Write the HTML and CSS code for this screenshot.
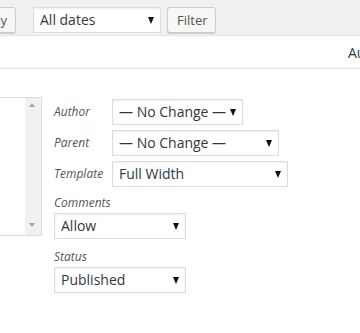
FILE: index.html
```html
<!DOCTYPE html>
<html>
<head>
<meta charset="utf-8">
<link rel="stylesheet" href="styles.css">
</head>
<body>
<div class="tablenav">
  <button class="btn btn-apply">Apply</button>
  <span class="sel sel-dates"><span class="sel-text">All dates</span><span class="arrow"></span></span>
  <button class="btn btn-filter">Filter</button>
</div>
<div class="thead">
  <span class="col-author">Author</span>
</div>
<div class="edit-row">
  <div class="listbox">
    <div class="list-body"></div>
    <div class="scrollbar">
      <span class="up"></span>
      <span class="down"></span>
    </div>
  </div>
  <div class="fields">
    <div class="inline-row">
      <span class="label">Author</span>
      <span class="sel w-author"><span class="sel-text">— No Change —</span><span class="arrow"></span></span>
    </div>
    <div class="inline-row">
      <span class="label">Parent</span>
      <span class="sel w-parent"><span class="sel-text">— No Change —</span><span class="arrow"></span></span>
    </div>
    <div class="inline-row">
      <span class="label">Template</span>
      <span class="sel w-template"><span class="sel-text">Full Width</span><span class="arrow"></span></span>
    </div>
    <div class="stack first">
      <span class="label">Comments</span>
      <span class="sel w-block"><span class="sel-text">Allow</span><span class="arrow"></span></span>
    </div>
    <div class="stack">
      <span class="label">Status</span>
      <span class="sel w-block"><span class="sel-text">Published</span><span class="arrow"></span></span>
    </div>
  </div>
</div>
</body>
</html>
```
FILE: styles.css
```css
* { box-sizing: border-box; }
html, body { margin: 0; padding: 0; background: #fff; }
body {
  width: 360px;
  height: 333px;
  overflow: hidden;
  font-family: "Open Sans", "Noto Sans", sans-serif;
  color: #444;
}
.tablenav {
  height: 35px;
  background: #f1f1f1;
  padding-top: 7px;
  display: flex;
  align-items: flex-start;
  white-space: nowrap;
}
.btn {
  height: 26px;
  font-family: inherit;
  font-size: 13px;
  color: #555;
  background: #f7f7f7;
  border: 1px solid #ccc;
  border-radius: 3px;
  box-shadow: 0 1px 0 #ccc;
  padding: 0 10px;
  line-height: 24px;
  flex: none;
}
.btn-apply {
  width: 54px;
  margin-left: -38px;
  text-align: left;
}
.btn-filter { margin-left: 6px; width: 49px; padding: 0 9px; }
.sel {
  position: relative;
  display: inline-flex;
  align-items: center;
  height: 26px;
  background: #fff;
  border: 1px solid #ddd;
  box-shadow: inset 0 1px 2px rgba(0,0,0,.07);
  padding-left: 6px;
  font-size: 14px;
  color: #32373c;
  flex: none;
}
.sel-text { line-height: 24px; }
.arrow {
  position: absolute;
  right: 6px;
  top: 9px;
  width: 0;
  height: 0;
  border-left: 3.5px solid transparent;
  border-right: 3.5px solid transparent;
  border-top: 7px solid #111;
}
.sel-dates { width: 128px; margin-left: 17px; }
.thead {
  height: 34px;
  border-top: 1px solid #e5e5e5;
  border-bottom: 1px solid #e1e1e1;
  position: relative;
  font-size: 14px;
  color: #32373c;
}
.col-author {
  position: absolute;
  left: 348px;
  top: 7px;
}
.edit-row {
  display: flex;
  align-items: flex-start;
  padding-top: 28px;
}
.listbox {
  width: 42px;
  height: 139px;
  border: 1px solid #ddd;
  border-left: none;
  display: flex;
  flex: none;
}
.list-body { flex: 1; }
.scrollbar {
  width: 16px;
  background: #f1f1f1;
  position: relative;
}
.up, .down {
  position: absolute;
  left: 4px;
  width: 0;
  height: 0;
  border-left: 3.5px solid transparent;
  border-right: 3.5px solid transparent;
}
.up { top: 5px; border-bottom: 4px solid #a3a3a3; }
.down { bottom: 8px; border-top: 4px solid #a3a3a3; }
.fields {
  margin-left: 12px;
  padding-top: 2px;
  display: flex;
  flex-direction: column;
}
.inline-row {
  display: flex;
  align-items: center;
  height: 26px;
  margin-bottom: 5px;
}
.label {
  font-style: italic;
  font-size: 12px;
  color: #555;
  line-height: 16px;
}
.inline-row .label { width: 58px; flex: none; }
.w-author { width: 131px; }
.w-parent { width: 167px; }
.w-template { width: 176px; }
.stack {
  display: flex;
  flex-direction: column;
  align-items: flex-start;
  gap: 2px;
  margin-top: 10px;
}
.stack.first { margin-top: 3px; }
.w-block { width: 132px; }
```
